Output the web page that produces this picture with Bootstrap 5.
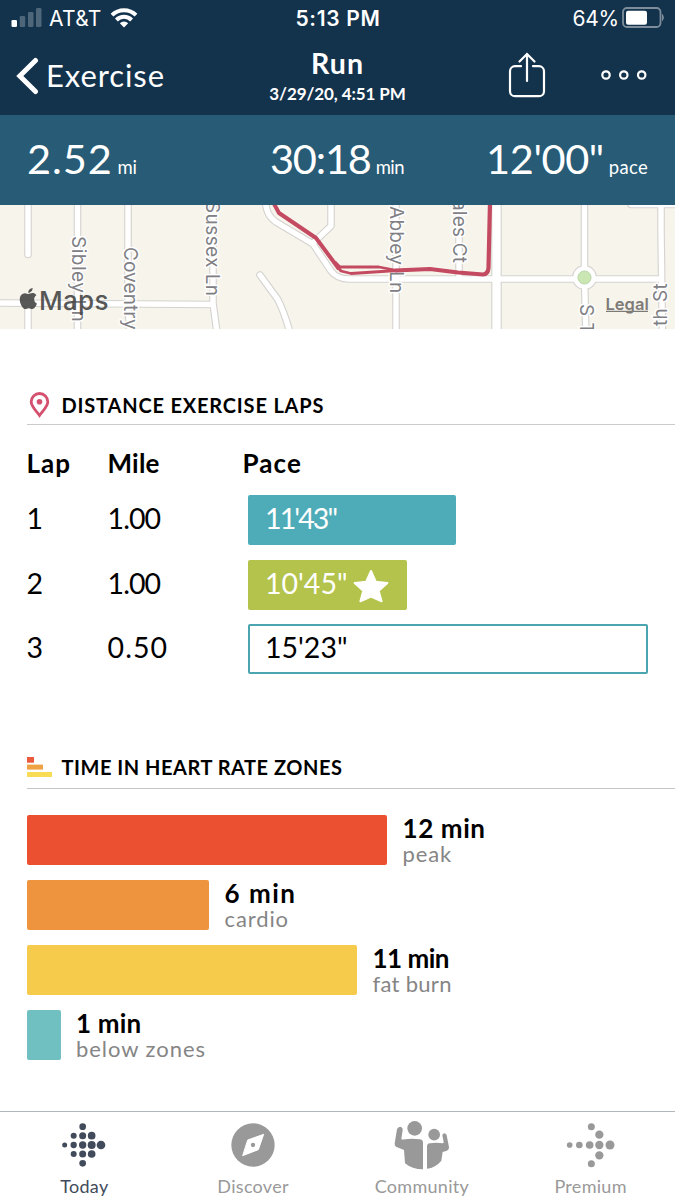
<!DOCTYPE html>
<html lang="en">
<head>
<meta charset="utf-8">
<meta name="viewport" content="width=device-width, initial-scale=1">
<title>Run</title>
<link href="https://cdn.jsdelivr.net/npm/bootstrap@5.3.0/dist/css/bootstrap.min.css" rel="stylesheet">
<style>
body{font-family:Lato,sans-serif;color:#000;background:#fff;width:675px;height:1200px;overflow:hidden}
svg{display:block;flex:none}
.top-area{background:#13324c;color:#fff}
.status{height:37px;font:400 21px/37px Inter,sans-serif;padding:0 9px 0 10px}
.status .clock{font-weight:600;letter-spacing:.7px}
.titlebar{height:78px;padding:0 16px}
.back{font-size:31px;letter-spacing:.9px;padding-bottom:1px;margin-left:7px}
.titles{padding-top:9px}
.title-main{font-size:28.5px;font-weight:700;line-height:34px;letter-spacing:1.1px}
.title-date{font-size:17px;font-weight:700;line-height:27px;letter-spacing:-.1px}
.stats{height:90px;background:#275b76;color:#fff;line-height:86px;padding:0 27px;white-space:nowrap}
.stats .num{font-size:41.5px}
.stats .unit{font-size:18.5px;margin-left:5px}
.stat-a{width:243px}
.stat-a .num{letter-spacing:.9px}
.stat-a .unit{letter-spacing:-.4px}
.stat-b .num{letter-spacing:-1.2px}
.stat-b .unit{letter-spacing:-.5px}
.stat-c .num{letter-spacing:-.4px}
.stat-c .unit{letter-spacing:.3px}
.sec-head{height:44px;margin-left:27px;border-bottom:1px solid #cbcbcb;font-size:20px;font-weight:700;letter-spacing:.82px}
.sec-ico{width:34.5px}
.laps-head{margin-top:52px;padding-top:5px}
.zones-head{margin-top:71px;letter-spacing:.52px;border-color:#c2c6c6}
.lap-cols{height:36px;margin:20px 0 14px;font-size:26px;font-weight:700;line-height:37px;padding-left:26.5px}
.lap-line{height:50px;margin-bottom:14.6px;padding-left:26.5px;font-size:28.5px;line-height:47px}
.c-lap{width:81px}
.c-mile{width:135px}
.c-lap,.c-mile,.pace-bar{flex:none;white-space:nowrap}
.pace-bar{height:50px;margin-left:5.5px;border-radius:2px;padding-left:17px;color:#fff}
.bar-teal{background:#4eacb8}
.bar-green{background:#b4c34b}
.bar-open{border:2px solid #4ba5b1;color:#000;padding-left:15px;line-height:43px}
.zones{margin-top:26px}
.zone{height:50px;margin:0 0 14.8px 27px}
.zone-bar{height:50px;border-radius:2px;flex:none}
.zone-text{padding-left:15.5px}
.zone-min{font-size:26px;font-weight:700;line-height:27px}
.zone-name{font-size:22px;line-height:24px;color:#858585;letter-spacing:.9px}
.tabs{height:89px;border-top:1px solid #b0b7ba;color:#999;font-size:18px}
.tabs .tab-art{height:66px}
.tabs .tab-label{line-height:16px;letter-spacing:.3px}
.tab-on{color:#424b5c}
.map text{font-family:Inter,sans-serif}
</style>
</head>
<body class="d-flex flex-column">

<header class="top-area">
  <div class="status d-flex justify-content-between">
    <div class="d-flex align-items-center" style="flex:1">
      <svg width="32" height="37" fill="#fff" style="margin-left:1px"><rect x="0.5" y="20" width="5.5" height="7" rx="1.3"/><g opacity=".25"><rect x="8.7" y="16" width="5.5" height="11" rx="1.3"/><rect x="17" y="12" width="5.5" height="15" rx="1.3"/><rect x="25" y="8" width="5.5" height="19" rx="1.3"/></g></svg>
      <span style="margin-left:6px;letter-spacing:.3px">AT&amp;T</span>
      <svg width="28" height="37" viewBox="0 0 28 37" fill="none" stroke="#fff" stroke-width="4" class="ms-2"><path d="M2 15.200a17 17 0 0 1 24 0"/><path d="M6.400 20a10.800 10.800 0 0 1 15.200 0"/><path d="M14 27.500l-4.200-4.200a6 6 0 0 1 8.400 0z" fill="#fff" stroke="none"/></svg>
    </div>
    <div class="clock">5:13 PM</div>
    <div class="d-flex justify-content-end align-items-center" style="flex:1">
      <span style="letter-spacing:-.2px">64%</span>
      <svg width="44" height="37" fill="none" style="margin-left:3px"><rect x="1" y="8" width="37.500" height="19" rx="4" stroke="#7d8d9c" stroke-width="1.800"/><rect x="4" y="10.700" width="21" height="14" rx="2.200" fill="#fff"/><path d="M40.500 14.500q1.800 3 0 6z" fill="#7d8d9c" stroke="#7d8d9c"/></svg>
    </div>
  </div>
  <nav class="titlebar d-flex justify-content-between align-items-stretch">
    <div class="d-flex align-items-center" style="flex:1">
      <svg width="23" height="38" viewBox="0 0 23 38" fill="none" stroke="#fff" stroke-width="5" stroke-linecap="round" stroke-linejoin="miter"><path d="M19.500 3.500L3.800 19l15.700 15.600"/></svg>
      <span class="back">Exercise</span>
    </div>
    <div class="titles text-center">
      <div class="title-main">Run</div>
      <div class="title-date">3/29/20, 4:51 PM</div>
    </div>
    <div class="d-flex align-items-center justify-content-end" style="flex:1">
      <svg width="38" height="46" viewBox="0 0 38 46" fill="none" stroke="#fff" stroke-width="2.200" stroke-linecap="round" style="margin-bottom:2px"><path d="M13 14.200H7a5 5 0 0 0-5 5v20a5 5 0 0 0 5 5h24a5 5 0 0 0 5-5v-20a5 5 0 0 0-5-5h-6"/><path d="M19 29V2.500M11.500 9.500L19 2l7.500 7.500"/></svg>
      <svg width="48" height="12" viewBox="0 0 48 12" fill="none" stroke="#fff" stroke-width="2.200" style="margin:0 11px 3px 54px"><circle cx="6" cy="6" r="3.700"/><circle cx="23.800" cy="6" r="3.700"/><circle cx="41.700" cy="6" r="3.700"/></svg>
    </div>
  </nav>
</header>

<section class="stats d-flex">
  <div class="stat-a"><span class="num">2.52</span><span class="unit">mi</span></div>
  <div class="stat-b"><span class="num">30:18</span><span class="unit">min</span></div>
  <div class="stat-c ms-auto"><span class="num">12'00"</span><span class="unit">pace</span></div>
</section>

<svg class="map" width="675" height="124" viewBox="0 205 675 124">
  <defs>
    <g id="streets" fill="none" stroke-linecap="round" stroke-linejoin="round">
      <path d="M28 190V254.500M28 303V340M77.500 190V340M128 190V300L130 340M213 190V303L218 340M0 303L213 304.500"/>
      <path d="M260 275L277.500 299Q285 313 292 340M262 190L267 210Q269 217 276 222L313 244 331 271Q337 279 349 279H661M331 190V226L313 243M396 190V340M459 190V278"/>
      <path d="M584.500 190V278L586 340M661 190V230L662.500 340M631 204.500H690"/>
    </g>
  </defs>
  <rect y="205" width="675" height="124" fill="#f7f4ec"/>
  <use href="#streets" stroke="#d5d3d0" stroke-width="7.600"/>
  <path d="M496.500 190V340" stroke="#d5d3d0" stroke-width="10.500"/>
  <circle cx="584.500" cy="277.500" r="12.500" fill="#d5d3d0"/>
  <use href="#streets" stroke="#fff" stroke-width="5.400"/>
  <path d="M496.500 190V340" stroke="#fff" stroke-width="8.300"/>
  <circle cx="584.500" cy="277.500" r="11.300" fill="#fff"/>
  <circle cx="584.500" cy="277.500" r="6.600" fill="#c9e6b3" stroke="#b5cfa4" stroke-width=".8"/>
  <g fill="#808084" font-size="19" stroke="#fff" stroke-width="3" paint-order="stroke" stroke-linejoin="round">
    <text transform="translate(72 236) rotate(90)" letter-spacing=".5">Sibley Ln</text>
    <text transform="translate(124 247) rotate(90)" letter-spacing=".1">Coventry</text>
    <text transform="translate(206 201) rotate(90)" letter-spacing=".4">Sussex Ln</text>
    <text transform="translate(389.500 206) rotate(90)" letter-spacing=".3">Abbey Ln</text>
    <text transform="translate(452.500 182) rotate(90)" letter-spacing=".2">Wales Ct</text>
    <text transform="translate(580 304) rotate(90)" letter-spacing=".3">S T</text>
    <text transform="translate(667 326) rotate(-90)" letter-spacing=".4">th St</text>
  </g>
  <g fill="none" stroke="#c44a61" stroke-linejoin="round">
    <path d="M273 202L279 213 316 238 339 269" stroke-width="4"/>
    <path d="M335 262L340 267H379L397 270.500" stroke-width="2.800"/>
    <path d="M336 265L341 271 351 273.500 397 270.500" stroke-width="2.800"/>
    <path d="M395 270.500L430 269 458 272.500 483 274.500Q488 274 488.500 268L490 202" stroke-width="4.200"/>
  </g>
  <g fill="#4a4a4a" opacity=".92">
    <path transform="translate(17.800 288) scale(.88)" d="M12.152 6.896c-.948 0-2.415-1.078-3.960-1.040-2.040.027-3.910 1.183-4.961 3.014-2.117 3.675-.546 9.103 1.519 12.090 1.013 1.454 2.208 3.090 3.792 3.039 1.520-.065 2.090-.987 3.935-.987 1.831 0 2.350.987 3.960.948 1.637-.026 2.676-1.480 3.676-2.948 1.156-1.688 1.636-3.325 1.662-3.415-.039-.013-3.182-1.221-3.220-4.857-.026-3.040 2.480-4.494 2.597-4.559-1.429-2.090-3.623-2.324-4.390-2.376-2-.156-3.675 1.090-4.610 1.090zM15.530 3.830c.843-1.012 1.400-2.427 1.245-3.830-1.207.052-2.662.805-3.532 1.818-.780.896-1.454 2.338-1.273 3.714 1.338.104 2.715-.688 3.559-1.701"/>
    <text x="39" y="309.500" font-size="26" font-weight="500" letter-spacing=".3">Maps</text>
  </g>
  <text x="605.500" y="309.500" font-size="16.500" font-weight="600" fill="#7d7b78">Legal</text>
  <path d="M606 311.300H648" stroke="#7d7b78" stroke-width="1.300"/>
</svg>

<main class="flex-grow-1">
  <div class="sec-head laps-head d-flex align-items-center">
    <div class="sec-ico"><svg width="25" height="26" viewBox="0 0 25 26" fill="none" stroke="#d4506f" stroke-width="2.800"><path d="M12.500 23.500C8.500 18 4.200 14.500 4.200 9.800a8.300 8.300 0 0 1 16.600 0c0 4.700-4.300 8.200-8.300 13.700z"/><circle cx="12.500" cy="9.800" r="2.800" fill="#d4506f" stroke="none"/></svg></div>
    <span>DISTANCE EXERCISE LAPS</span>
  </div>
  <div class="lap-cols d-flex">
    <div class="c-lap" style="letter-spacing:1px">Lap</div><div class="c-mile" style="letter-spacing:.200px">Mile</div><div style="letter-spacing:1.100px">Pace</div>
  </div>
  <div class="lap-line d-flex">
    <div class="c-lap">1</div><div class="c-mile" style="letter-spacing:-.900px">1.00</div>
    <div class="pace-bar bar-teal" style="width:208px;letter-spacing:-1.900px">11'43"</div>
  </div>
  <div class="lap-line d-flex">
    <div class="c-lap">2</div><div class="c-mile" style="letter-spacing:-.900px">1.00</div>
    <div class="pace-bar bar-green d-flex" style="width:159px">10'45"<svg width="36" height="34" viewBox="0 0 36 34" fill="#fff" stroke="#fff" stroke-width="2" stroke-linejoin="round" style="margin:9px 0 0 5px"><path d="M18 2l4.800 10.700 11.600 1.200-8.700 7.800 2.900 10.600L18 27.600 7.400 32.300l2.900-10.600L1.600 13.900l11.600-1.200z"/></svg></div>
  </div>
  <div class="lap-line d-flex">
    <div class="c-lap">3</div><div class="c-mile" style="letter-spacing:1.100px">0.50</div>
    <div class="pace-bar bar-open" style="width:400px">15'23"</div>
  </div>

  <div class="sec-head zones-head d-flex align-items-center">
    <div class="sec-ico"><svg width="25" height="20"><path fill="#ea5a3d" d="M0 0h7v5.700H0z"/><path fill="#eea244" d="M0 7.600h16v5H0z"/><path fill="#f8dc55" d="M0 15h25v5H0z"/></svg></div>
    <span>TIME IN HEART RATE ZONES</span>
  </div>
  <div class="zones">
    <div class="zone d-flex"><div class="zone-bar" style="width:360px;background:#eb5131"></div><div class="zone-text"><div class="zone-min" style="letter-spacing:.600px">12 min</div><div class="zone-name">peak</div></div></div>
    <div class="zone d-flex"><div class="zone-bar" style="width:182px;background:#ee943e"></div><div class="zone-text"><div class="zone-min" style="letter-spacing:1.500px">6 min</div><div class="zone-name">cardio</div></div></div>
    <div class="zone d-flex"><div class="zone-bar" style="width:330px;background:#f6cb4b"></div><div class="zone-text"><div class="zone-min" style="letter-spacing:-.500px">11 min</div><div class="zone-name" style="letter-spacing:.300px">fat burn</div></div></div>
    <div class="zone d-flex"><div class="zone-bar" style="width:33.500px;background:#70bfc1"></div><div class="zone-text"><div class="zone-min" style="letter-spacing:.200px">1 min</div><div class="zone-name" style="letter-spacing:.950px">below zones</div></div></div>
  </div>
</main>

<footer class="tabs d-flex text-center">
  <div class="col-3 tab-on">
    <div class="tab-art d-flex justify-content-center align-items-center"><svg width="48" height="48" viewBox="180 63 144 144" fill="currentColor"><circle cx="248" cy="80" r="10"/><circle cx="221" cy="107" r="9"/><circle cx="248" cy="107" r="10.500"/><circle cx="275" cy="107" r="11.500"/><circle cx="194" cy="135" r="7.500"/><circle cx="221" cy="135" r="9.500"/><circle cx="248" cy="135" r="11"/><circle cx="275" cy="135" r="12"/><circle cx="303" cy="135" r="13"/><circle cx="221" cy="162" r="9"/><circle cx="248" cy="162" r="10.500"/><circle cx="275" cy="162" r="11.500"/><circle cx="248" cy="190" r="10"/></svg></div>
    <div class="tab-label">Today</div>
  </div>
  <div class="col-3">
    <div class="tab-art d-flex justify-content-center align-items-center"><svg width="48" height="48" viewBox="687 63 144 144"><circle cx="759" cy="135" r="65" fill="#999"/><path d="M791 103L775 149 728 167 743 120z" fill="#fff" stroke="#fff" stroke-width="3" stroke-linejoin="round"/><circle cx="759" cy="135" r="6.500" fill="#999"/></svg></div>
    <div class="tab-label">Discover</div>
  </div>
  <div class="col-3">
    <div class="tab-art d-flex justify-content-center align-items-center"><svg width="60" height="54" viewBox="169 54 180 162" fill="#999"><circle cx="237" cy="85" r="22"/><circle cx="295.500" cy="104" r="17.500"/><path d="M184 88Q186 80 194 80 202 82 201 90L197 117Q198 119 203 118.500 228 115 252 118 262 119 262 128V208Q229 208 208 190L205 150 181 140Q176 137 177 130z"/><path d="M274 206V138Q275 130 283 130 300 127 322 130 325 129 324 126L320 106Q321 100 327 100 332 101 333 106L340 142Q341 150 334 152L321 156 317 182Q300 203 274 206z"/></svg></div>
    <div class="tab-label">Community</div>
  </div>
  <div class="col-3">
    <div class="tab-art d-flex justify-content-center align-items-center"><svg width="50" height="48" viewBox="692 63 150 144" fill="#999"><circle cx="703" cy="135" r="8.500"/><circle cx="732" cy="135" r="10"/><circle cx="763" cy="135" r="11.500"/><circle cx="792" cy="135" r="12.500"/><circle cx="824" cy="135" r="13.500"/><circle cx="768" cy="80" r="10.500"/><circle cx="792" cy="104" r="12.500"/><circle cx="792" cy="166" r="12.500"/><circle cx="768" cy="191" r="10.500"/></svg></div>
    <div class="tab-label">Premium</div>
  </div>
</footer>

<script src="https://cdn.jsdelivr.net/npm/bootstrap@5.3.0/dist/js/bootstrap.bundle.min.js"></script>
</body>
</html>
